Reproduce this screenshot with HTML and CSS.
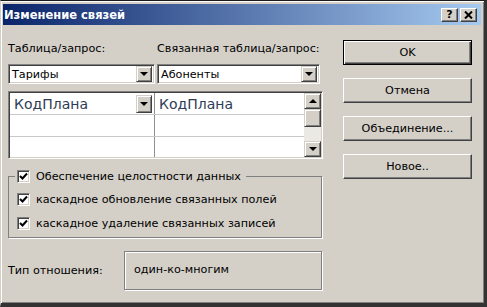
FILE: index.html
```html
<!DOCTYPE html>
<html lang="ru">
  <head>
    <meta charset="UTF-8" />
    <title>Изменение связей</title>
    <link rel="stylesheet" href="styles.css">
  </head>
  <body>
    <div class="window">
      <div class="titlebar">
        <span class="title">Изменение связей</span>
        <div class="caption-btns">
          <span class="cap-btn">?</span>
          <span class="cap-btn">
            <svg width="9" height="8" viewBox="0 0 9 8"><path d="M1 0.5 L8 7.5 M8 0.5 L1 7.5" stroke="#000" stroke-width="2"/></svg>
          </span>
        </div>
      </div>

      <div class="content">
        <div class="left">
          <div class="pair labels">
            <span>Таблица/запрос:</span>
            <span>Связанная таблица/запрос:</span>
          </div>
          <div class="pair combos">
            <div class="combo c1"><span class="val">Тарифы</span><span class="drop"><i class="tri"></i></span></div>
            <div class="combo c2"><span class="val">Абоненты</span><span class="drop"><i class="tri"></i></span></div>
          </div>

          <div class="grid">
            <div class="cells">
              <div class="row">
                <div class="cell first">КодПлана<span class="drop cell-drop"><i class="tri"></i></span></div>
                <div class="cell">КодПлана</div>
              </div>
              <div class="row"><div class="cell first"></div><div class="cell"></div></div>
              <div class="row"><div class="cell first"></div><div class="cell"></div></div>
            </div>
            <div class="scrollbar">
              <span class="sb-btn"><i class="tri up"></i></span>
              <span class="sb-thumb"></span>
              <span class="sb-track"></span>
              <span class="sb-btn"><i class="tri"></i></span>
            </div>
          </div>

          <fieldset class="group">
            <legend>
              <span class="check"><span class="box"><svg width="9" height="9" viewBox="0 0 9 9"><path d="M1 4 L3.5 6.5 L8 1.5" fill="none" stroke="#000" stroke-width="2"/></svg></span>Обеспечение целостности данных</span>
            </legend>
            <div class="check row-check"><span class="box"><svg width="9" height="9" viewBox="0 0 9 9"><path d="M1 4 L3.5 6.5 L8 1.5" fill="none" stroke="#000" stroke-width="2"/></svg></span>каскадное обновление связанных полей</div>
            <div class="check row-check"><span class="box"><svg width="9" height="9" viewBox="0 0 9 9"><path d="M1 4 L3.5 6.5 L8 1.5" fill="none" stroke="#000" stroke-width="2"/></svg></span>каскадное удаление связанных записей</div>
          </fieldset>

          <div class="relation">
            <span class="rel-label">Тип отношения:</span>
            <div class="rel-box">один-ко-многим</div>
          </div>
        </div>

        <div class="buttons">
          <button class="btn default">OK</button>
          <button class="btn">Отмена</button>
          <button class="btn">Объединение...</button>
          <button class="btn">Новое..</button>
        </div>
      </div>
    </div>
  </body>
</html>
```

FILE: styles.css
```css
* {
  margin: 0;
  padding: 0;
  box-sizing: border-box;
}
body {
  width: 487px;
  height: 307px;
  overflow: hidden;
  background: #d4d0c8;
  font-family: "DejaVu Sans", sans-serif;
  font-size: 11.2px;
  color: #000;
}
.window {
  width: 487px;
  height: 307px;
  background: #d4d0c8;
  border-top: 1px solid #1a1a1a;
  border-left: 1px solid #d4d0c8;
  border-right: 3px solid #333;
  border-bottom: 4px solid #333;
  padding: 3px 3px 0 2px;
  box-shadow: inset 1px 1px #fff, inset -1px -1px #808080;
}

/* title */
.titlebar {
  height: 21px;
  display: flex;
  align-items: center;
  justify-content: space-between;
  background: linear-gradient(to right, #0a246a, #a6caf0);
  padding: 0 4px 0 1px;
}
.title {
  color: #fff;
  font-weight: bold;
  font-size: 11.5px;
}
.caption-btns {
  display: flex;
  gap: 2px;
}
.cap-btn {
  width: 17px;
  height: 14px;
  display: flex;
  align-items: center;
  justify-content: center;
  font-weight: bold;
  font-size: 11px;
  background: #d4d0c8;
  border: 1px solid;
  border-color: #fff #404040 #404040 #fff;
  box-shadow: inset -1px -1px #808080;
}

.content {
  display: flex;
  padding: 15px 0 0 5px;
}
.left {
  width: 315px;
}
.pair {
  display: grid;
  grid-template-columns: 149px 166px;
}
.labels {
  margin-top: 2px;
  line-height: 13px;
}
.combos {
  margin-top: 9px;
}
.combo {
  height: 20px;
  display: flex;
  align-items: center;
  justify-content: space-between;
  background: #fff;
  border: 1px solid;
  border-color: #808080 #fff #fff #808080;
  box-shadow: inset 1px 1px #404040, inset -1px -1px #d4d0c8;
  padding: 1px 2px 1px 2px;
}
.c1 {
  width: 147px;
}
.c2 {
  width: 163px;
}
.val {
  padding-left: 1px;
}
.drop {
  width: 16px;
  height: 16px;
  display: flex;
  align-items: center;
  justify-content: center;
  background: #d4d0c8;
  border: 1px solid;
  border-color: #d4d0c8 #404040 #404040 #d4d0c8;
  box-shadow: inset 1px 1px #fff, inset -1px -1px #808080;
}
.tri {
  width: 0;
  height: 0;
  border-left: 4px solid transparent;
  border-right: 4px solid transparent;
  border-top: 4px solid #000;
}
.tri.up {
  border-top: none;
  border-bottom: 4px solid #000;
}

/* grid */
.grid {
  margin-top: 7px;
  width: 315px;
  height: 68px;
  display: flex;
  background: #fff;
  border: 1px solid;
  border-color: #808080 #fff #fff #808080;
  box-shadow: inset 1px 1px #404040, inset -1px -1px #d4d0c8;
  padding: 1px;
}
.cells {
  flex: 1;
  display: flex;
  flex-direction: column;
}
.row {
  display: flex;
  height: 22px;
  border-bottom: 1px solid #c8c8c8;
}
.row:last-child {
  flex: 1;
  border-bottom: none;
}
.cell {
  flex: 1;
  display: flex;
  align-items: center;
  justify-content: space-between;
  padding: 0 2px 0 4px;
  font-size: 14px;
  color: #2e3b55;
}
.cell.first {
  flex: 0 0 145px;
  border-right: 1px solid #909090;
}
.cell-drop {
  height: 18px;
}
.scrollbar {
  width: 17px;
  display: flex;
  flex-direction: column;
}
.sb-btn,
.sb-thumb {
  display: flex;
  align-items: center;
  justify-content: center;
  background: #d4d0c8;
  border: 1px solid;
  border-color: #d4d0c8 #404040 #404040 #d4d0c8;
  box-shadow: inset 1px 1px #fff, inset -1px -1px #808080;
}
.sb-btn {
  height: 16px;
}
.sb-thumb {
  height: 18px;
}
.sb-track {
  flex: 1;
  background: #ebe9e4;
}

/* group */
.group {
  margin-top: 9px;
  width: 314px;
  border: 1px solid #808080;
  box-shadow: 1px 1px #fff;
  padding: 2px 6px 2px 6px;
}
legend {
  padding: 0 5px 0 2px;
}
.check {
  display: flex;
  align-items: center;
  height: 17px;
  gap: 6px;
}
.row-check {
  height: 24px;
  padding-left: 2px;
}
.box {
  width: 13px;
  height: 13px;
  display: flex;
  align-items: center;
  justify-content: center;
  background: #fff;
  border: 1px solid;
  border-color: #808080 #fff #fff #808080;
  box-shadow: inset 1px 1px #404040, inset -1px -1px #d4d0c8;
}

.relation {
  margin-top: 13px;
  display: flex;
  align-items: center;
}
.rel-label {
  width: 116px;
}
.rel-box {
  width: 198px;
  height: 39px;
  display: flex;
  align-items: center;
  padding: 0 0 3px 9px;
  border: 1px solid #808080;
  box-shadow: inset 1px 1px #fff, 1px 1px #fff;
}

/* buttons */
.buttons {
  margin-left: 20px;
  display: flex;
  flex-direction: column;
  gap: 13px;
}
.btn {
  width: 129px;
  height: 25px;
  font: inherit;
  background: #d4d0c8;
  border: 1px solid;
  border-color: #fff #404040 #404040 #fff;
  box-shadow: inset -1px -1px #808080;
}
.btn.default {
  border-color: #000;
  box-shadow: inset 1px 1px #fff, inset -1px -1px #404040, inset -2px -2px #808080;
}
```
